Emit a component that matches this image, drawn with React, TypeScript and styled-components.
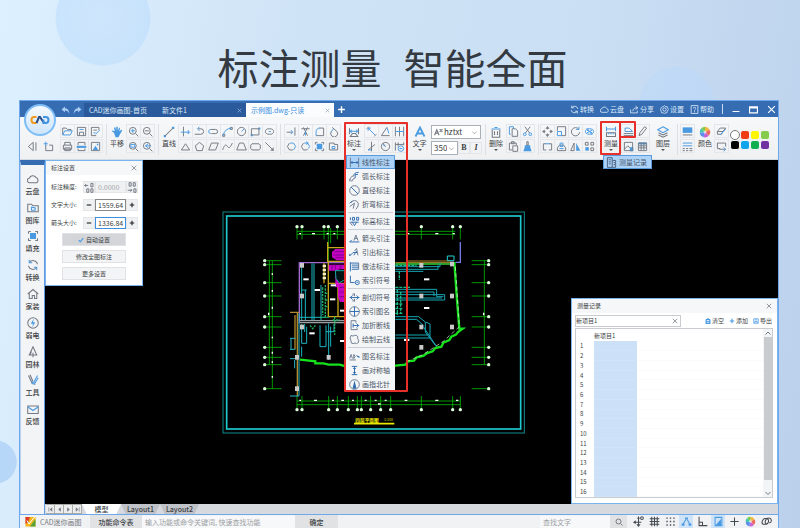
import React from "react";
import styled, { createGlobalStyle, css } from "styled-components";

const C = {
  grey: "#747a83",
  blue: "#4a9ae2",
  navy: "#2f6cb0",
  bar: "#356cb2",
  barDark: "#2a5a9c",
  red: "#e8302a",
  line: "#dcdfe3",
  text: "#3c3f44",
};

const GlobalStyle = createGlobalStyle`
  * { box-sizing: border-box; }
  body {
    margin: 0;
    font-family: "Noto Sans CJK SC", "Noto Sans", sans-serif;
    font-size: 7px;
    line-height: 10px;
    color: ${C.text};
  }
  button, input, select { font: inherit; color: inherit; margin: 0; padding: 0; }
  button { background: none; border: 0; white-space: nowrap; }
  svg { display: block; flex: none; }
`;

/* ---------- icons ---------- */

type Glyph = { g?: string; b?: string; fg?: string; fb?: string };

const glyphs: Record<string, Glyph> = {
  back: { g: "M9 2L2 8L9 14V2M13 2V14" },
  newFile: { g: "M4 6V14H14V6H9", b: "M1 4H7M4 1V7" },
  open: { g: "M1 13V3H6L8 5H13V7", b: "M1 13L4 7H15L12 13Z" },
  save: { g: "M2 2H14V14H2ZM5 14V9H11V14", b: "M5 5H11" },
  saveAs: { g: "M9 14H2V2H13V6M5 6H10", b: "M8 12L14 6M5 10H8" },
  print: { g: "M4 6V2H12V6M2 6H14V12H2ZM4 10H12V14H4Z" },
  pdf: { g: "M3 6V2H13V6M3 11V14H13V11", fb: "M1 7H15V10H1Z" },
  image: { g: "M2 2H14V14H2Z", fb: "M4 13L8 7L12 13ZM10 4H12V6H10Z" },
  hand: { fb: "M4 9L1 7L2 6L5 7L4 2L6 2L7 6L7 1H9L9 6L11 2L12 3L11 7L14 5L15 6L12 11L10 15H6Z" },
  zoomIn: { g: "M7 2A5 5 0 1 0 7 12A5 5 0 1 0 7 2M11 11L15 15", b: "M4 7H10M7 4V10" },
  zoomOut: { g: "M7 2A5 5 0 1 0 7 12A5 5 0 1 0 7 2M11 11L15 15M4 7H10" },
  zoomWin: { g: "M7 2A5 5 0 1 0 7 12A5 5 0 1 0 7 2M11 11L15 15", b: "M4 5H10V9H4Z" },
  zoomPrev: { g: "M7 2A5 5 0 1 0 7 12A5 5 0 1 0 7 2M11 11L15 15", b: "M9 4L5 7L9 10M5 7H13" },
  line: { g: "M3 13L13 3", fb: "M1 12H4V15H1ZM12 1H15V4H12Z" },
  xline: { g: "M5 1V15", b: "M1 9H15M12 6V12" },
  pline: { g: "M1 12H10A4 4 0 0 0 10 4H6", b: "M8 1L5 4L8 7" },
  ellArc: { g: "M4 5H11A3 3 0 0 1 11 11H5", b: "M4 5A3 3 0 0 0 4 11" },
  arc: { b: "M2 14Q3 4 14 3", g: "M1 12H4V15H1ZM12 2H15V5H12Z" },
  circle: { g: "M8 2A6 6 0 1 0 8 14A6 6 0 1 0 8 2", b: "M8 8L12 4" },
  rect: { g: "M2 4H13V13H2Z", fb: "M12 2H15V5H12ZM1 12H4V15H1Z" },
  ellipse: { g: "M8 4A6 4 0 1 0 8 12A6 4 0 1 0 8 4", b: "M7 8H10" },
  triangle: { g: "M8 4L14 13H2Z" },
  pentagon: { g: "M8 2L14 7L12 14H4L2 7Z" },
  para: { g: "M5 3H15L11 13H1Z" },
  spline: { g: "M1 13C4 4 6 5 8 8S12 10 15 3" },
  trapezoid: { g: "M5 3H11L15 13H1Z" },
  round: { g: "M3 4H13L15 6V11L13 13H3L1 11V6Z" },
  segment: { g: "M2 2L14 14", fg: "M14 9V14H9Z" },
  extend: { g: "M1 9H9M13 2V14", b: "M7 6L10 9L7 12" },
  trim: { g: "M2 4H14M5 2L11 14M11 2L5 14", b: "M8 8V14" },
  fillet: { g: "M14 14V3H8M3 14H14", b: "M3 14V9Q3 3 9 3" },
  chamfer: { g: "M6 2L13 8M13 8A5 5 0 1 1 5 8", b: "M4 9L8 4" },
  region: { g: "M5 3L2 8L5 13H10", b: "M6 3H11L14 8L11 13" },
  ring: { g: "M5 3L2 8L5 13H10L11 12", b: "M6 3H11L14 8L12 11M9 1L12 3L9 5" },
  hatch: { g: "M2 2H5M11 2H14V5M14 11V14H11M5 14H2V11M2 5V2", fb: "M4 4H12V12H4Z" },
  block: { g: "M2 3H9V5H14V13H2Z", b: "M6 8H10V11H6Z" },
  dim: { g: "M2 3V11M14 3V11M3 14H13L10 10H6Z", b: "M2 7H14M5 5L3 7L5 9M11 5L13 7L11 9" },
  alignDim: { g: "M1 4L4 1M12 15L15 12", b: "M3 3L13 13M3 7V3H7" },
  angleDim: { g: "M14 14H2L10 2", b: "M10 2L13 11" },
  contDim: { g: "M2 1V15M14 1V15M8 1V15", b: "M2 8H14" },
  node: { g: "M8 1V15M3 13L13 5", b: "M3 13H8" },
  radDim: { g: "M8 2A6 6 0 1 0 8 14A6 6 0 1 0 8 2M4 3L8 8", b: "M8 8L4 5" },
  styleDim: { g: "M2 2V14M6 2V8M14 2V6M2 5H14", b: "M10 7A4 4 0 1 0 10 15A4 4 0 1 0 10 7M8 11H12" },
  letterA: { b: "M2 14L8 2L14 14M4 10H12" },
  trash: { b: "M2 4H14M6 2H10", g: "M3 5V15H13V5M6 7V12M10 7V12" },
  copy: { g: "M6 4H11L14 7V15H6Z", b: "M4 12H2V1H8V4" },
  cut: { b: "M4 10A2 2 0 1 0 4 14A2 2 0 1 0 4 10M12 10A2 2 0 1 0 12 14A2 2 0 1 0 12 10", g: "M5 10L12 1M11 10L4 1" },
  paste: { g: "M6 13H2V3H12V6M5 1H9V4H5ZM7 7H14V15H7Z" },
  brush: { g: "M7 1H9V6H7Z", fb: "M4 6H12V9L14 15H2L4 9Z" },
  move: { g: "M8 2V5M8 11V14M2 8H5M11 8H14", fg: "M8 0L11 4H5ZM8 16L11 12H5ZM0 8L4 5V11ZM16 8L12 5V11Z" },
  scale: { g: "M2 7V1H14V14H8", b: "M2 8H8V14H2Z" },
  rotate: { g: "M13 5A6 6 0 1 0 14 9", b: "M13 1V5H9" },
  rotate3: { b: "M8 4A6 4 0 1 0 8 12A6 4 0 1 0 8 4M4 6L12 10M12 6L4 10M4 3L12 13" },
  explode: { g: "M6 4H2V13H6M10 4H14V13H10", b: "M5 4H11" },
  offset: { g: "M2 14H14V10L11 6H5L2 10Z", b: "M5 11H11M6 3H10V8H6Z" },
  mirror: { g: "M6 3V14H1Z", fb: "M9 3V14H15Z" },
  array: { g: "M2 2H6V6H2ZM10 2H14V6H10ZM10 10H14V14H10Z", fb: "M2 9H7V14H2Z" },
  measure: { g: "M2 9H14V14H2Z", b: "M2 1V7M14 1V7M2 4H14M5 9V11M8 9V11M11 9V11" },
  area: { b: "M3 8V3H9L14 8Z", g: "M1 11H15M1 14H15" },
  pencil: { g: "M3 14L4 10L11 1L14 3L7 12Z" },
  picture: { g: "M2 2H14V14H2ZM2 12L7 7L10 10", fb: "M10 9H15V15H10Z" },
  grid: { g: "M2 3H14V14H2ZM2 7H14M2 10H14M6 3V14M10 3V14", fb: "M2 2H14V5H2Z" },
  layers: { g: "M2 9L8 12L14 9M2 12L8 15L14 12", b: "M8 1L15 5L8 9L1 5Z" },
  solid: { fb: "M1 2H15V10H1Z", g: "M1 13H15" },
  dashes: { b: "M1 3H15M1 7H15", g: "M1 11H4M6 11H9M11 11H15M1 14H4M6 14H9M11 14H15" },
  match: { g: "M2 8L6 3H14L10 8ZM2 8V12H8L10 8", b: "M6 13L14 5" },
  lineCol: { g: "M6 11H2V3H14V8M5 12L14 12", b: "M11 9L14 12L11 15" },
  cloud: { g: "M4 13A3 3 0 0 1 3 7A5 5 0 0 1 12 6A4 4 0 0 1 13 13Z" },
  library: { g: "M1 3H6L8 5H15V13H1Z", b: "M6 7V11H11V8Z" },
  sync: { g: "M14 7A6 6 0 0 0 3 5M2 9A6 6 0 0 0 13 11", b: "M3 1V5H7M13 15V11H9" },
  home: { g: "M1 8L8 2L15 8M3 7V14H7V10H10V14H13V7" },
  power: { g: "M8 1A7 7 0 1 0 8 15A7 7 0 1 0 8 1", fb: "M9 2L5 9H8L7 14L11 7H8Z" },
  tree: { g: "M8 1L13 12H3ZM8 9V15M4 12L6 7" },
  tools: { g: "M2 2L7 13M4 1L8 10M9 13L11 14", b: "M14 2L8 13L6 9M15 5L10 13" },
  mail: { g: "M1 4H15V14H1Z", b: "M1 5L8 10L15 5" },
  mLinear: { g: "M2 1V15M14 1V15", b: "M2 8H14M5 6L3 8L5 10M11 6L13 8L11 10" },
  mArc: { g: "M1 15Q1 8 7 7M4 15Q5 11 9 10M1 12L4 15", b: "M7 7Q7 2 14 2M9 10V5L13 5" },
  mDia: { g: "M8 1A7 7 0 1 0 8 15A7 7 0 1 0 8 1", b: "M3 3L13 13" },
  mBend: { g: "M3 5Q8 0 12 4T10 15M1 11L8 6L6 14", b: "M1 6L5 3" },
  mElev: { b: "M2 2V6M5 2H8V6H5ZM11 2H14V6H11ZM2 9H14M5 9L8 14L11 9", g: "M1 9L5 14" },
  mArrow: { g: "M7 11L10 3L13 11M8 8H12", b: "M1 13H15M1 13L4 10" },
  mLead: { g: "M8 6L11 2L13 12", b: "M1 13L6 8H12M1 13V10M7 12L11 6" },
  mMake: { b: "M2 2V15M2 3H14M4 6H14M4 9H14M4 12H14", g: "M14 3V12" },
  mIndex: { b: "M2 1V11H8M12 8A3 3 0 1 0 12 14A3 3 0 1 0 12 8M11 11H13" },
  mCut: { b: "M1 8H15M5 5L2 8L5 11M11 5L14 8L11 11", g: "M8 2V6M8 10V14M6 2V5M6 11V14" },
  mName: { g: "M8 1A7 7 0 1 0 8 15A7 7 0 1 0 8 1", b: "M1 8H15M8 1V15" },
  mBreak: { g: "M3 1H10V4M3 1V14H12V12", b: "M6 8H14M11 5L14 8L11 11M6 5V11" },
  mCloud: { g: "M3 2Q6 4 8 2Q11 1 13 4Q11 6 14 9Q15 13 11 14Q9 12 6 14Q2 14 3 10Q0 6 3 2" },
  mTitle: { g: "M1 11L3 5L5 11M7 5V11Q11 8 7 5M1 13H10", b: "M12 8H15M11 6L15 10" },
  mSym: { b: "M8 2V14M4 2H12M4 14H12M6 5H10M6 11H10" },
  mNorth: { g: "M8 1A7 7 0 1 0 8 15A7 7 0 1 0 8 1", fb: "M8 2L11 14H5Z" },
  record: { g: "M2 1H9V15H2ZM9 5H14V15H9M4 4H7M4 7H7M4 10H7", b: "M11 8H13M11 11H13" },
  undo: { fg: "M1 6L7 1V4Q14 4 15 14Q12 8 7 8V11Z" },
  redo: { fg: "M15 6L9 1V4Q2 4 1 14Q4 8 9 8V11Z" },
  share: { g: "M1 8V14H13V10M5 11Q5 5 13 5M10 2L14 5L10 8" },
  gear: { g: "M8 1L10 3H13L14 6L15 8L13 11L12 14H9L8 15L6 14H3L2 11L1 8L2 5L4 3H6ZM8 5A3 3 0 1 0 8 11A3 3 0 1 0 8 5" },
  help: { g: "M2 1H14V15H2ZM6 6Q6 4 8 4T10 6T8 9V10M8 11V13" },
  close: { g: "M2 2L14 14M14 2L2 14" },
  min: { g: "M1 13H15" },
  max: { g: "M1 3H15V14H1ZM1 5H15" },
  plus: { g: "M8 2V14M2 8H14" },
  minus: { g: "M2 8H14" },
  chevron: { g: "M3 6L8 11L13 6" },
  chevUp: { g: "M3 11L8 6L13 11" },
  first: { g: "M4 3V13", fg: "M12 3V13L6 8Z" },
  prev: { fg: "M11 3V13L5 8Z" },
  next: { fg: "M5 3V13L11 8Z" },
  last: { g: "M12 3V13", fg: "M4 3V13L10 8Z" },
  check: { b: "M2 8L6 13L14 3" },
  decLess: { g: "M1 5H6M3 3L1 5L3 7M10 2H13V7H10ZM4 10H7V15H4ZM10 10H13V15H10Z" },
  decMore: { g: "M3 1H6V6H3ZM9 1H12V6H9ZM1 12H7M5 10L7 12L5 14M10 10H13V15H10Z" },
  search: { g: "M7 2A5 5 0 1 0 7 12A5 5 0 1 0 7 2M11 11L15 15" },
  snap: { g: "M8 3V14M3 9H12M13 1A2 2 0 1 0 13 5A2 2 0 1 0 13 1", fg: "M8 16L11 12H5ZM0 9L4 6V12ZM8 0L10 4H6Z" },
  gridOn: { g: "M4 1V15M8 1V15M12 1V15M1 4H15M1 8H15M1 12H15" },
  dots: { fg: "M2 2H4V4H2ZM7 2H9V4H7ZM12 2H14V4H12ZM2 7H4V9H2ZM7 7H9V9H7ZM12 7H14V9H12ZM2 12H4V14H2ZM7 12H9V14H7ZM12 12H14V14H12Z" },
  track: { b: "M3 12L7 5M9 5L13 12", fb: "M6 2H10V5H6ZM1 11H5V14H1ZM11 11H15V14H11Z" },
  ortho: { g: "M3 1V14H15M3 9H8V14" },
  polar: { b: "M3 2H13V14H3Z", fb: "M4 13L12 4V13Z" },
  link: { g: "M3 12A3 4 30 0 1 8 4A3 4 30 0 1 7 12ZM9 12A3 4 30 0 1 11 3A3 3 0 0 1 12 10" },
  textIcon: { g: "M1 13L5 3L9 13M3 9H8M10 2L15 7M15 2L10 7" },
};

const Icon = ({ n, s = 11, g = C.grey, b = C.blue, w = 1.4 }: { n: string; s?: number; g?: string; b?: string; w?: number }) => {
  const p = glyphs[n];
  return (
    <svg width={s} height={s} viewBox="0 0 16 16" fill="none" strokeWidth={w} aria-hidden="true">
      {p.fg && <path d={p.fg} fill={g} />}
      {p.fb && <path d={p.fb} fill={b} />}
      {p.g && <path d={p.g} stroke={g} />}
      {p.b && <path d={p.b} stroke={b} />}
    </svg>
  );
};

const Wheel = ({ s }: { s: number }) => (
  <svg width={s} height={s} viewBox="0 0 16 16" aria-hidden="true">
    <path d="M8 8L8 1A7 7 0 0 1 14 5Z" fill="#f0b840" />
    <path d="M8 8L14 5A7 7 0 0 1 13 13Z" fill="#ee6a5a" />
    <path d="M8 8L13 13A7 7 0 0 1 6 15Z" fill="#c765d8" />
    <path d="M8 8L6 15A7 7 0 0 1 1 9Z" fill="#5a8ff0" />
    <path d="M8 8L1 9A7 7 0 0 1 3 3Z" fill="#45c4b0" />
    <path d="M8 8L3 3A7 7 0 0 1 8 1Z" fill="#7ccb4b" />
    <circle cx="8" cy="8" r="2" fill="#fff" opacity=".6" />
  </svg>
);

/* ---------- page ---------- */

const Page = styled.div`
  height: 100vh;
  display: flex;
  flex-direction: column;
  overflow: hidden;
  background:
    radial-gradient(circle 48px at 103px 18px, rgba(184, 218, 252, 0.3) 0%, rgba(184, 218, 252, 0.5) 97%, transparent 100%),
    radial-gradient(circle 38px at 677px 104px, rgba(186, 216, 250, 0.5) 97%, transparent 100%),
    radial-gradient(circle 22px at -5px 462px, rgba(170, 206, 246, 0.7) 97%, transparent 100%),
    linear-gradient(100deg, #dcf0ff 0%, #cfe3f6 35%, #cbdff4 65%, #bbd0eb 100%);
`;

const Headline = styled.h1`
  margin: 0;
  height: 100px;
  padding-top: 37px;
  padding-right: 15px;
  display: flex;
  justify-content: center;
  gap: 22px;
  font-size: 41px;
  line-height: 58px;
  font-weight: 400;
  color: #343a41;
`;

const AppWindow = styled.main`
  flex: 1;
  min-height: 0;
  margin: 0 21px 0 19px;
  display: flex;
  flex-direction: column;
  border: 1px solid #6ea8ea;
  border-bottom: 0;
  background: #f2f3f4;
`;

/* ---------- title bar ---------- */

const TitleBar = styled.header`
  height: 16px;
  flex: none;
  display: flex;
  align-items: stretch;
  background: ${C.bar};
  color: #dce9f8;
  padding-left: 4px;
`;

const LogoButton = styled.button`
  position: relative;
  z-index: 3;
  width: 32px;
  height: 32px;
  margin: 3px 5px -20px 0;
  border-radius: 50%;
  border: 2px solid #7dbdf8;
  background: linear-gradient(#f4f9fe, #cfe5fa);
  display: grid;
  place-items: center;
`;

const QuickTools = styled.div`
  display: flex;
  align-items: center;
  gap: 3px;
  width: 23px;
  padding-top: 2px;
`;

const DocTabs = styled.nav`
  display: flex;
  margin-top: 2px;
`;

const DocTab = styled.button<{ $w: number; $active?: boolean }>`
  width: ${(p) => p.$w}px;
  display: flex;
  align-items: center;
  justify-content: space-between;
  padding: 0 4px 0 5px;
  background: ${(p) => (p.$active ? "#fbfcfe" : C.barDark)};
  color: ${(p) => (p.$active ? "#3a8ee0" : "#dce9f8")};
`;

const AddTab = styled.button`
  width: 14px;
  display: grid;
  place-items: center;
`;

const TitleMenu = styled.div`
  margin-left: auto;
  display: flex;
  align-items: center;
  gap: 6px;
`;

const TitleItem = styled.button`
  display: flex;
  align-items: center;
  gap: 1px;
`;

const WindowButtons = styled.div`
  display: flex;
  align-items: center;
  justify-content: space-between;
  width: 56px;
  height: 10px;
  align-self: center;
  margin-left: 8px;
  padding: 0 2px 0 9px;
  border-left: 1px solid #c6dbf3;
`;

/* ---------- ribbon ---------- */

const Ribbon = styled.section`
  height: 43px;
  flex: none;
  display: flex;
  padding: 7px 0 4px;
  background: linear-gradient(#f7f8fa, #eff0f2);
  border-bottom: 1px solid #d3dbe5;
`;

const Group = styled.div<{ $start?: number; $end?: number; $gap?: number; $last?: boolean }>`
  position: relative;
  display: flex;
  flex: none;
  gap: ${(p) => p.$gap ?? 1}px;
  padding: 0 ${(p) => p.$end ?? 3}px 0 ${(p) => p.$start ?? 1}px;
  ${(p) => !p.$last && css`border-right: 1px solid ${C.line};`}
`;

const ToolGrid = styled.div<{ $cols: number; $cell?: number }>`
  display: grid;
  grid-template-columns: repeat(${(p) => p.$cols}, ${(p) => p.$cell ?? 14}px);
  grid-auto-rows: 15px;
  align-content: end;
  height: 30px;
`;

const Tool = styled.button<{ $flat?: boolean }>`
  display: grid;
  place-items: center;
  height: 14px;
  border: 1px solid ${(p) => (p.$flat ? "transparent" : "#e4e6ea")};
  margin-left: -1px;
`;

const BigTool = styled.button<{ $w?: number }>`
  width: ${(p) => p.$w ?? 18}px;
  height: 32px;
  padding-top: 2px;
  display: flex;
  flex-direction: column;
  align-items: center;
  line-height: 11px;
`;

const Caret = styled.span`
  border: 2px solid transparent;
  border-top-color: #555;
  border-bottom: 0;
`;

const FontPanel = styled.div`
  display: flex;
  flex-direction: column;
  gap: 2px;
  width: 51px;
  padding: 1px 0;
`;

const FontRow = styled.div`
  display: flex;
  align-items: center;
  height: 14px;
`;

const SelectBox = styled.label<{ $w: number }>`
  width: ${(p) => p.$w}px;
  height: 14px;
  display: flex;
  align-items: center;
  gap: 1px;
  padding: 0 2px;
  border: 1px solid #aab0b8;
  background: #fff;
  select {
    appearance: none;
    flex: 1;
    min-width: 0;
    border: 0;
    background: none;
    font-size: 8px;
  }
`;

const StyleKey = styled.button<{ $italic?: boolean }>`
  width: 12px;
  height: 12px;
  border: 1px solid #e3e5e8;
  font-family: "Liberation Serif", serif;
  font-size: 8px;
  font-weight: 700;
  font-style: ${(p) => (p.$italic ? "italic" : "normal")};
`;

const Swatches = styled.div`
  display: grid;
  grid-template-columns: repeat(4, 10px);
  grid-auto-rows: 10px;
  place-items: center;
  align-content: start;
  padding-top: 6px;
`;

const Swatch = styled.button<{ $c: string }>`
  width: 10px;
  height: 10px;
  border-radius: ${(p) => (p.$c === "#ffffff" ? 5 : 3)}px;
  border: 1px solid ${(p) => (p.$c === "#ffffff" ? "#777" : "#f3f4f5")};
  background: ${(p) => p.$c};
`;

const Highlight = styled.span<{ $l: number; $t: number; $w: number; $h: number }>`
  position: absolute;
  z-index: 5;
  pointer-events: none;
  left: ${(p) => p.$l}px;
  top: ${(p) => p.$t}px;
  width: ${(p) => p.$w}px;
  height: ${(p) => p.$h}px;
  border: 2px solid ${C.red};
  border-radius: 1px;
`;

const DropMenu = styled.ul<{ $l: number }>`
  position: absolute;
  z-index: 4;
  left: ${(p) => p.$l}px;
  top: 31px;
  margin: 0;
  padding: 0;
  list-style: none;
  background: #f4f5f6;
`;

const MenuItem = styled.button<{ $on?: boolean }>`
  width: 100%;
  height: 14px;
  display: flex;
  align-items: center;
  gap: 2px;
  padding: 0 4px 0 2px;
  color: #4a5568;
  border: 1px solid ${(p) => (p.$on ? "#5b9bdc" : "transparent")};
  background: ${(p) => (p.$on ? "#acd3f7" : "none")};
`;

const MenuRule = styled.li`
  height: 1px;
  margin: 1px 2px;
  background: #c9ced6;
`;

/* ---------- body ---------- */

const Body = styled.div`
  flex: 1;
  min-height: 0;
  display: flex;
`;

const SideBar = styled.nav`
  width: 25px;
  flex: none;
  display: flex;
  flex-direction: column;
  padding: 5px 0 85px;
  border-top: 5px solid ${C.bar};
  border-right: 1px solid #5f9be0;
  border-left: 1px solid #b7d3f1;
  background: #f3f4f6;
`;

const SideItem = styled.button`
  flex: 1;
  display: flex;
  flex-direction: column;
  align-items: center;
  justify-content: center;
  gap: 1px;
  font-weight: 500;
`;

const WorkArea = styled.div`
  flex: 1;
  min-width: 0;
  display: flex;
  flex-direction: column;
`;

const Canvas = styled.div`
  position: relative;
  flex: 1;
  min-height: 0;
  background: #000;
  padding: 51px 0 0 177px;
`;

const panelCss = css`
  position: absolute;
  background: #fff;
  border: 1px solid #79b4ee;
  font-size: 6px;
`;

const SettingsPanel = styled.form`
  ${panelCss}
  left: 0;
  top: 0;
  width: 98px;
  padding-bottom: 5px;
`;

const PanelHead = styled.div`
  display: flex;
  align-items: center;
  justify-content: space-between;
  height: 14px;
  padding: 0 5px;
  background: #f6f7f8;
`;

const Field = styled.div`
  display: flex;
  align-items: center;
  height: 12px;
  margin: 6px 4px 0 5px;
  > label { flex: 1; white-space: nowrap; }
`;

const StepKey = styled.button`
  width: 12px;
  height: 12px;
  display: grid;
  place-items: center;
  background: #f0f1f2;
  border: 1px solid #e4e6e8;
`;

const NumberInput = styled.input<{ $state?: "off" | "focus" }>`
  width: 31px;
  height: 12px;
  padding-left: 2px;
  font-size: 7px;
  border: 1px solid ${(p) => (p.$state === "focus" ? "#3f8fe0" : p.$state === "off" ? "#e4e6e8" : "#888")};
  background: ${(p) => (p.$state === "off" ? "#f0f1f2" : "#fff")};
  color: ${(p) => (p.$state === "off" ? "#a0a3a8" : C.text)};
`;

const PanelButton = styled.button<{ $on?: boolean }>`
  width: 64px;
  height: 13px;
  margin: 4px auto 0;
  display: flex;
  align-items: center;
  justify-content: center;
  gap: 2px;
  border: 1px solid #e0e2e5;
  background: ${(p) => (p.$on ? "#d3d5d8" : "#f3f4f5")};
`;

const RecordPanel = styled.section`
  ${panelCss}
  right: 0;
  top: 138px;
  bottom: 0;
  width: 207px;
  display: flex;
  flex-direction: column;
`;

const RecordBar = styled.div`
  display: flex;
  align-items: center;
  gap: 5px;
  height: 15px;
  padding: 2px 5px 1px 3px;
`;

const NameBox = styled.div`
  width: 106px;
  height: 12px;
  display: flex;
  align-items: center;
  border: 1px solid #c9ccd0;
  margin-right: auto;
  padding-right: 2px;
  input { flex: 1; min-width: 0; border: 0; }
`;

const RecordAction = styled.button`
  display: flex;
  align-items: center;
  gap: 1px;
`;

const SheetBox = styled.div`
  flex: 1;
  min-height: 0;
  display: flex;
  margin: 0 4px 5px 3px;
  border: 1px solid #c9ccd0;
  overflow: hidden;
`;

const Sheet = styled.table`
  flex: 1;
  height: 100%;
  border-collapse: collapse;
  table-layout: fixed;
  line-height: 9px;
  th, td { padding: 0; font-weight: 400; text-align: left; }
  thead th { height: 12px; }
  tbody th { padding-left: 4px; }
  tbody td + td { border-bottom: 1px solid #fafafa; }
  tbody td:nth-child(2) { background: #cce1f7; border-bottom: 1px solid #cfe4f9; }
`;

const ScrollTrack = styled.div`
  width: 9px;
  display: flex;
  flex-direction: column;
  align-items: center;
  background: #f3f4f5;
`;

const ScrollThumb = styled.div`
  width: 8px;
  height: 143px;
  margin-bottom: auto;
  background: #c9cbce;
`;

const SheetTabs = styled.div`
  height: 10px;
  flex: none;
  display: flex;
  padding-left: 1px;
  background: #d6d9dd;
`;

const NavKey = styled.button`
  width: 9px;
  height: 10px;
  display: grid;
  place-items: center;
  border: 1px solid #aaa;
  border-left-width: 0;
  background: #eceded;
`;

const SheetTab = styled.button<{ $active?: boolean }>`
  width: 39px;
  height: 10px;
  font-size: 7px;
  line-height: 10px;
  font-weight: 500;
  background: ${(p) => (p.$active ? "#fff" : "#bfc2c6")};
  clip-path: polygon(0 0, 100% 0, 88% 100%, 12% 100%);
`;

const StatusBar = styled.footer`
  height: 14px;
  flex: none;
  display: flex;
  align-items: center;
  padding-left: 5px;
  border-top: 1px solid #6ea8ea;
  background: #f1f2f4;
`;

const Brand = styled.span`
  display: flex;
  align-items: center;
  gap: 4px;
  width: 65px;
  color: #777b82;
`;

const StatusKey = styled.button<{ $w: number }>`
  width: ${(p) => p.$w}px;
  height: 13px;
  display: grid;
  place-items: center;
  background: #e0e2e4;
  font-weight: 500;
`;

const StatusInput = styled.input<{ $w: number; $push?: boolean }>`
  width: ${(p) => p.$w}px;
  height: 12px;
  border: 0;
  margin-left: ${(p) => (p.$push ? "auto" : 0)};
  padding-left: 3px;
  background: #f7f8f9;
  &::placeholder { color: #9b9ea3; opacity: 1; }
`;

const StatusIcons = styled.div`
  display: flex;
  gap: 2px;
  padding: 0 5px 0 4px;
`;

const StatusIcon = styled.button<{ $on?: boolean }>`
  width: 14px;
  height: 13px;
  display: grid;
  place-items: center;
  background: ${(p) => (p.$on ? "#cfe3f8" : "none")};
`;

/* ---------- drawing ---------- */

const rangeLines = (pts: number[], f: (v: number) => string) => pts.map(f).join("");
const sideY = [182, 194, 248, 288, 350, 381, 442, 472, 494, 566];
const topX = [261, 276, 342, 355, 382, 634, 728, 751];
const botX = [261, 276, 356, 382, 415, 442, 454, 482, 512, 542, 634, 728, 751];
const columns = [
  [276, 196], [276, 288], [276, 381], [261, 472], [356, 472], [634, 196], [726, 192],
  [634, 288], [726, 288], [634, 381], [726, 381], [634, 442], [261, 566],
];
const labels = [[288, 238], [322, 270], [306, 400], [370, 256], [398, 332], [650, 238], [650, 324], [398, 423], [590, 420], [368, 298]];

const PlanDrawing = () => (
  <svg width="304" height="223" viewBox="36 33 912 669" fill="none" role="img" aria-label="平面图">
    <rect x="39" y="36" width="904" height="663" stroke="#0f8a8e" strokeWidth="3" />
    <rect x="50" y="48" width="882" height="639" stroke="#20c8d0" strokeWidth="5" />
    <g stroke="#00b400" strokeWidth="2.5">
      <path d={rangeLines(sideY, (y) => `M165 ${y}H214M785 ${y}H836`)} />
      <path d="M178 182V494M187 182V566M823 182V494" />
      <path d={rangeLines(topX, (x) => `M${x} 80V118`) + "M261 94H736M261 103H736"} />
      <path d={rangeLines(botX, (x) => `M${x} 588V628`) + "M261 603H751M261 614H751"} />
      <path d="M355 118V190M362 84V130" />
    </g>
    <g fill="#dfffdc">
      {sideY.map((y) => <React.Fragment key={y}><circle cx="164" cy={y} r="5" /><circle cx="836" cy={y} r="5" /></React.Fragment>)}
      {topX.map((x) => <circle key={x} cx={x} cy="80" r="5" />)}
      {botX.map((x) => <circle key={x} cx={x} cy="629" r="5" />)}
    </g>
    <path d="M268 101h5M306 101h9M350 101h6M370 101h6M590 101h8M676 101h9M728 101h6M268 601h5M312 601h9M366 601h6M394 601h8M426 601h6M464 601h6M494 601h6M524 601h6M584 601h8M676 601h9M738 601h7M504 612h8M187 220v5M187 270v5M187 320v6M176 338v8M187 410v5M187 455v6M187 484v5M187 528v5M821 338v8" stroke="#fff" strokeWidth="4" />
    <path d="M268 370V188H404" stroke="#a06ad0" strokeWidth="4" />
    <path d="M751 126V187H736" stroke="#6f7ce8" strokeWidth="4" />
    <path d="M556 188H736M590 183H720" stroke="#b08a2c" strokeWidth="3" />
    <path d="M556 192H730" stroke="#31d23a" strokeWidth="4" />
    <path d="M240 337H268M262 337V588M255 345V448" stroke="#b08a2c" strokeWidth="4" />
    <path d="M267 340V588H240M243 415V448M256 415H240M256 448H240M240 476H262M254 480V505" stroke="#28b9c4" strokeWidth="3" />
    <path d="M353 126V187M353 143H404M353 184H404M355 187V350H384V250M355 250H404M384 350H404M342 190V250" stroke="#c8a61c" strokeWidth="4" />
    <path d="M376 147H404V181H380L366 172V156ZM356 194H404V208H386V250H404V306H390L384 290V262H376V212H356Z" fill="#e800e8" opacity=".85" />
    <path d="M372 155H404M370 165H404M376 173H404M388 262H404M388 276H404M388 290H404M366 194V208M376 194V208M392 194V208" stroke="#5d0070" strokeWidth="2" />
    <path d="M376 212H404V240L388 248L378 236Z" fill="#041414" stroke="#12a8a0" strokeWidth="3" />
    <path d="M270 362H404M270 368H404" stroke="#9aa1a5" strokeWidth="4" />
    <path d="M270 352H350M306 190V360M312 190V360M333 255V360M275 200V360M286 270V360M290 270H274M275 372V430H290V380M330 376V440H348V376M356 370V480M362 380V440M348 395H372V372M284 396V372M275 440V470" stroke="#1bb5c0" strokeWidth="3" />
    <path d="M346 255V350M338 262V345M374 350V405M368 360H390M300 376L308 386L316 376M345 280H352M345 300H352M345 320H352M330 352H356" stroke="#1fae62" strokeWidth="4" strokeDasharray="7 3" />
    <path d="M338 198h10M338 210h10M338 222h10M338 234h10" stroke="#f3efc0" strokeWidth="7" />
    <path d="M556 200H690V188M556 208H684V196M556 214H640M556 268H680V290H700M556 276H672V288M556 284H704V300H556M556 294H696M556 350H626L646 366V396M556 358H620L640 376M640 380L680 440M556 405H654M556 414H660M648 366L660 372V410M646 396L676 436" stroke="#17a6b4" strokeWidth="3" />
    <path d="M556 196H620M568 214V240M556 262H600M562 270V345M572 275V340M556 312H580M556 326H578M556 340H580" stroke="#19b884" strokeWidth="4" strokeDasharray="9 3" />
    <path d="M733 186L741 300L748 386H758L744 396L738 404L724 410L718 420L700 428L694 440L676 444L668 454L650 460L640 468L620 472L612 482L594 484L586 494L556 497L404 498L390 494H356L340 490H316V484L270 479" stroke="#17e01d" strokeWidth="7" />
    <path d="M736 200L748 380L700 424L640 463L590 485" stroke="#d8f7d8" strokeWidth="2" strokeDasharray="12 8" />
    <path d="M712 168H732V182H712Z" stroke="#2ad0d0" strokeWidth="3" />
    <g fill="#c9c9c9">{columns.map(([x, y]) => <rect key={`${x}-${y}`} x={x - 6} y={y - 7} width="12" height="14" />)}</g>
    <g fill="#fff">{labels.map(([x, y]) => <rect key={`${x}-${y}`} x={x - 8} y={y - 3} width="16" height="6" />)}</g>
    <path d="M432 671H553" stroke="#e8e800" strokeWidth="5" />
    <text x="436" y="665" fill="#f4f400" fontSize="14" fontWeight="700">四层平面图</text>
    <text x="522" y="664" fill="#d8d800" fontSize="11">1:100</text>
  </svg>
);

/* ---------- data ---------- */

const sideItems = [
  ["cloud", "云盘"], ["library", "图库"], ["hatch", "填充"], ["sync", "转换"], ["home", "家装"],
  ["power", "弱电"], ["tree", "园林"], ["tools", "工具"], ["mail", "反馈"],
];
const menuGroups = [
  [["mLinear", "线性标注"], ["mArc", "弧长标注"], ["mDia", "直径标注"], ["mBend", "折弯标注"]],
  [["mElev", "标高标注"]],
  [["mArrow", "箭头引注"], ["mLead", "引出标注"], ["mMake", "做法标注"], ["mIndex", "索引符号"]],
  [["mCut", "剖切符号"], ["mName", "索引图名"], ["mBreak", "加折断线"], ["mCloud", "绘制云线"]],
  [["mTitle", "图名标注"], ["mSym", "画对称轴"], ["mNorth", "画指北针"]],
];
const palette = ["#ffffff", "#f03c14", "#fdf600", "#86cc4c", "#000000", "#10a4ec", "#10b050", "#7030a0"];

const Tools = ({ names, cols, flat, cell }: { names: string; cols: number; flat?: boolean; cell?: number }) => (
  <ToolGrid $cols={cols} $cell={cell}>
    {names.split(" ").map((n) => (
      <Tool key={n} $flat={flat} aria-label={n}><Icon n={n} /></Tool>
    ))}
  </ToolGrid>
);

const Big = ({ n, label, caret, w }: { n: string; label: string; caret?: boolean; w?: number }) => (
  <BigTool $w={w}>
    {n === "wheel" ? <Wheel s={12} /> : <Icon n={n} s={12} w={n === "letterA" ? 2.4 : 1.4} />}
    {label}
    {caret && <Caret />}
  </BigTool>
);

export default function App() {
  return (
    <Page>
      <GlobalStyle />
      <Headline><span>标注测量</span><span>智能全面</span></Headline>
      <AppWindow>
        <TitleBar>
          <LogoButton aria-label="CAD">
            <svg width="20" height="10" viewBox="0 0 40 20" fill="none" strokeWidth="4">
              <path d="M13 4H8Q3 4 3 10T8 16H13" stroke="#f39a1e" />
              <path d="M13 16L18 4H20L28 16" stroke="#2b4b86" />
              <path d="M26 4H31Q37 4 37 10T31 16H27V9" stroke="#3f93e0" />
            </svg>
          </LogoButton>
          <QuickTools>
            <button aria-label="撤销"><Icon n="undo" s={9} g="#a9cdf5" /></button>
            <button aria-label="重做"><Icon n="redo" s={9} g="#a9cdf5" /></button>
          </QuickTools>
          <DocTabs>
            <DocTab $w={73}>CAD迷你画图-首页</DocTab>
            <DocTab $w={89}>新文件1<Icon n="close" s={5} g="#9bbce4" w={2} /></DocTab>
            <DocTab $w={88} $active>示例图.dwg-只读<Icon n="close" s={5} g="#8a9bb0" w={2} /></DocTab>
          </DocTabs>
          <AddTab aria-label="新建"><Icon n="plus" s={9} g="#fff" w={2.5} /></AddTab>
          <TitleMenu>
            {[["sync", "转换"], ["cloud", "云盘"], ["share", "分享"], ["gear", "设置"], ["help", "帮助"]].map(([n, t]) => (
              <TitleItem key={t}><Icon n={n} s={9} g="#e6f0fb" b="#e6f0fb" />{t}</TitleItem>
            ))}
          </TitleMenu>
          <WindowButtons>
            <button aria-label="最小化"><Icon n="min" s={8} g="#fff" w={2} /></button>
            <button aria-label="最大化"><Icon n="max" s={9} g="#fff" w={2} /></button>
            <button aria-label="关闭"><Icon n="close" s={9} g="#fff" w={2} /></button>
          </WindowButtons>
        </TitleBar>

        <Ribbon>
          <Group $start={5} $gap={4}>
            <Tools names="back newFile" cols={2} cell={16} flat />
            <Tools names="open save saveAs print pdf image" cols={3} />
          </Group>
          <Group>
            <Big n="hand" label="平移" />
            <Tools names="zoomIn zoomOut zoomWin zoomPrev" cols={2} />
          </Group>
          <Group>
            <Big n="line" label="直线" />
            <Tools cols={7} names="xline pline ellArc arc circle rect ellipse triangle pentagon para spline trapezoid round segment" />
          </Group>
          <Group $start={4} $last>
            <Tools cols={4} names="extend trim fillet chamfer region ring hatch block" />
          </Group>
          <Group $gap={2} $end={2} $last>
            <Big n="dim" label="标注" caret />
            <Tools cols={3} names="alignDim angleDim contDim node radDim styleDim" />
            <DropMenu $l={2}>
              {menuGroups.map((items, i) => (
                <React.Fragment key={i}>
                  {i > 0 && <MenuRule />}
                  {items.map(([n, t]) => (
                    <li key={t}><MenuItem $on={t === "线性标注"}><Icon n={n} g="#6d7c92" b={C.navy} />{t}</MenuItem></li>
                  ))}
                </React.Fragment>
              ))}
            </DropMenu>
            <Highlight $l={0} $t={-2} $w={64} $h={270} />
          </Group>
          <Group $start={0}>
            <Big n="letterA" label="文字" caret w={21} />
            <FontPanel>
              <FontRow>
                <SelectBox $w={50}>
                  <Icon n="textIcon" s={9} w={2} />
                  <select aria-label="字体"><option>hztxt</option></select>
                  <Icon n="chevron" s={7} />
                </SelectBox>
              </FontRow>
              <FontRow>
                <SelectBox $w={27}>
                  <select aria-label="字高"><option>350</option></select>
                  <Icon n="chevron" s={7} />
                </SelectBox>
                <StyleKey>B</StyleKey>
                <StyleKey $italic>I</StyleKey>
              </FontRow>
            </FontPanel>
          </Group>
          <Group $gap={2}>
            <Big n="trash" label="删除" caret />
            <Tools cols={2} names="copy cut paste brush" />
          </Group>
          <Group $start={2} $last>
            <Tools cols={4} names="move scale rotate rotate3 explode offset mirror array" />
          </Group>
          <Group $gap={2} $start={2}>
            <Big n="measure" label="测量" caret />
            <Tools cols={2} names="area pencil picture grid" />
            <Big n="layers" label="图层" caret w={22} />
            <DropMenu $l={3}>
              <li><MenuItem $on><Icon n="record" g="#4a5f7c" b="#4a5f7c" />测量记录</MenuItem></li>
            </DropMenu>
            <Highlight $l={0} $t={-3} $w={21} $h={34} />
            <Highlight $l={19} $t={-3} $w={17} $h={17} />
          </Group>
          <Group $start={3} $last>
            <Tools cols={1} names="solid dashes" />
            <Big n="wheel" label="颜色" />
            <Tools cols={1} names="match lineCol" />
            <Swatches>
              {palette.map((c) => <Swatch key={c} $c={c} aria-label={c} />)}
            </Swatches>
          </Group>
        </Ribbon>

        <Body>
          <SideBar>
            {sideItems.map(([n, t]) => (
              <SideItem key={t}><Icon n={n} s={12} />{t}</SideItem>
            ))}
          </SideBar>
          <WorkArea>
            <Canvas>
              <PlanDrawing />
              <SettingsPanel>
                <PanelHead>标注设置<button type="button" aria-label="关闭"><Icon n="close" s={6} w={2} /></button></PanelHead>
                <Field>
                  <label htmlFor="prec">标注精度:</label>
                  <StepKey type="button" aria-label="减少小数位"><Icon n="decLess" /></StepKey>
                  <NumberInput id="prec" $state="off" defaultValue="0.0000" />
                  <StepKey type="button" aria-label="增加小数位"><Icon n="decMore" /></StepKey>
                </Field>
                <Field>
                  <label htmlFor="tsize">文字大小:</label>
                  <StepKey type="button" aria-label="减小"><Icon n="minus" s={6} w={3} g="#222" /></StepKey>
                  <NumberInput id="tsize" defaultValue="1559.64" />
                  <StepKey type="button" aria-label="增大"><Icon n="plus" s={6} w={3} g="#222" /></StepKey>
                </Field>
                <Field>
                  <label htmlFor="asize">箭头大小:</label>
                  <StepKey type="button" aria-label="减小"><Icon n="minus" s={6} w={3} g="#222" /></StepKey>
                  <NumberInput id="asize" $state="focus" defaultValue="1336.84" />
                  <StepKey type="button" aria-label="增大"><Icon n="plus" s={6} w={3} g="#222" /></StepKey>
                </Field>
                <PanelButton type="button" $on><Icon n="check" s={6} w={3} />自动设置</PanelButton>
                <PanelButton type="button">修改全图标注</PanelButton>
                <PanelButton type="button">更多设置</PanelButton>
              </SettingsPanel>
              <RecordPanel>
                <PanelHead>测量记录<button aria-label="关闭"><Icon n="close" s={6} w={2} /></button></PanelHead>
                <RecordBar>
                  <NameBox>
                    <input aria-label="项目" defaultValue="新项目1" />
                    <Icon n="close" s={6} w={2} />
                  </NameBox>
                  <RecordAction><Icon n="trash" s={6} w={3} g={C.blue} />清空</RecordAction>
                  <RecordAction><Icon n="plus" s={6} w={3} g={C.blue} />添加</RecordAction>
                  <RecordAction><Icon n="save" s={6} w={2} g={C.blue} />导出</RecordAction>
                </RecordBar>
                <SheetBox>
                  <Sheet>
                    <colgroup><col width="18" /><col width="43" /><col /></colgroup>
                    <thead><tr><th /><th scope="col">新项目1</th><th /></tr></thead>
                    <tbody>
                      {Array.from({ length: 16 }, (_, i) => (
                        <tr key={i}><th scope="row">{i + 1}</th><td /><td /></tr>
                      ))}
                    </tbody>
                  </Sheet>
                  <ScrollTrack>
                    <Icon n="chevUp" s={8} w={2} />
                    <ScrollThumb />
                    <Icon n="chevron" s={8} w={2} />
                  </ScrollTrack>
                </SheetBox>
              </RecordPanel>
            </Canvas>
            <SheetTabs>
              {["first", "prev", "next", "last"].map((n) => (
                <NavKey key={n} aria-label={n}><Icon n={n} s={7} /></NavKey>
              ))}
              <SheetTab $active>模型</SheetTab>
              <SheetTab>Layout1</SheetTab>
              <SheetTab>Layout2</SheetTab>
            </SheetTabs>
          </WorkArea>
        </Body>

        <StatusBar>
          <Brand>
            <svg width="11" height="11" viewBox="0 0 22 22" aria-hidden="true">
              <path d="M1 2H21V21H1Z" fill="#f2b61c" />
              <path d="M1 2H10L6 13L1 16Z" fill="#dc3b28" />
              <path d="M21 6L10 21H21Z" fill="#58a23a" />
              <path d="M4 9L8 16L20 1" fill="none" stroke="#fff" strokeWidth="2" />
            </svg>
            CAD迷你画图
          </Brand>
          <StatusKey $w={52}>功能命令表</StatusKey>
          <StatusInput $w={153} aria-label="命令" placeholder="输入功能或命令关键词, 快速查找功能" />
          <StatusKey $w={43}>确定</StatusKey>
          <StatusInput $w={70} $push aria-label="查找文字" placeholder="查找文字" />
          <StatusKey $w={17} aria-label="查找"><Icon n="search" s={8} w={2} /></StatusKey>
          <StatusIcons>
            {["snap", "gridOn", "dots", "track", "ortho", "polar", "plus", "wheel", "link"].map((n) => (
              <StatusIcon key={n} aria-label={n} $on={n === "track" || n === "polar"}>
                {n === "wheel" ? <Wheel s={11} /> : <Icon n={n} s={11} g="#444a52" w={1.5} />}
              </StatusIcon>
            ))}
          </StatusIcons>
        </StatusBar>
      </AppWindow>
    </Page>
  );
}
